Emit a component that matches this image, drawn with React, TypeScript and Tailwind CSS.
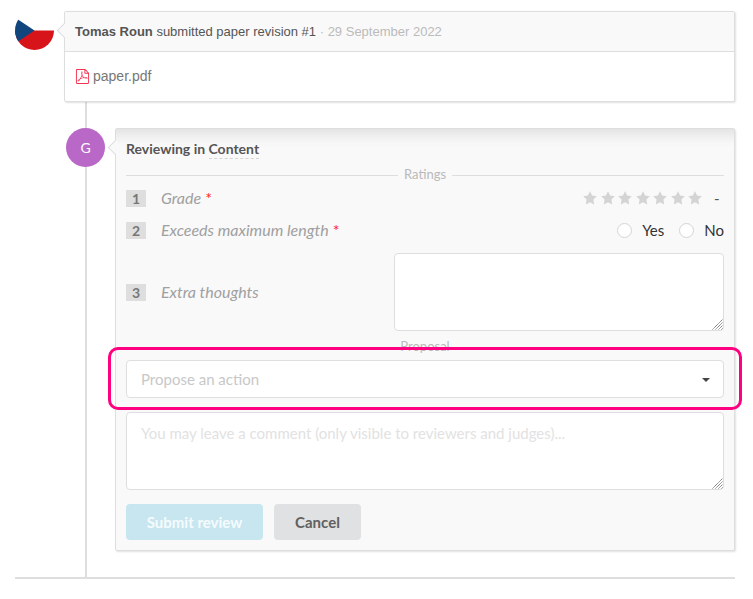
import type { ComponentProps } from "react";
import { ImFilePdf } from "react-icons/im";

const STARS = [1, 2, 3, 4, 5, 6, 7];

function Notch() {
  return (
    <span className="absolute top-[13px] -left-[6px] size-[11px] rotate-45 border-b border-l border-[#dededf] bg-[#f9f9f9]" />
  );
}

function SectionDivider({ label }: { label: string }) {
  return (
    <div className="flex h-[14px] items-center gap-[6px] text-[13px] leading-[14px] text-[#b9b9b9]">
      <span className="h-px flex-1 bg-[#dededf]" />
      <span className="pb-[3px]">{label}</span>
      <span className="h-px flex-1 bg-[#dededf]" />
    </div>
  );
}

function QuestionLabel({
  index,
  text,
  required,
  htmlFor,
}: {
  index: number;
  text: string;
  required?: boolean;
  htmlFor?: string;
}) {
  return (
    <div className="flex flex-1 items-center gap-[15px]">
      <span className="h-[17px] w-5 bg-[#dedede] text-center text-[14px] leading-[17px] font-bold text-[#777]">
        {index}
      </span>
      <label htmlFor={htmlFor} className="text-[16px] leading-5 text-[#a0a0a0] italic">
        {text}
        {required && <span className="text-[#f22] not-italic"> *</span>}
      </label>
    </div>
  );
}

function Star({ value }: { value: number }) {
  return (
    <button type="button" aria-label={`Rate ${value}`} className="block text-[#d4d4d5]">
      <svg viewBox="0 0 14 14" className="size-[14px]" fill="currentColor">
        <path d="M7 .2 9.1 4.6l4.7.6-3.4 3.3.8 4.9L7 11.2l-4.2 2.2.8-4.9L.2 5.2l4.7-.6Z" />
      </svg>
    </button>
  );
}

function Choice({ label }: { label: string }) {
  return (
    <label className="flex items-center gap-[10px] text-[#333]">
      <input
        type="radio"
        name="exceeds"
        className="size-[15px] appearance-none rounded-full border border-[#d4d4d5] bg-white"
      />
      {label}
    </label>
  );
}

function TextArea(props: ComponentProps<"textarea">) {
  return (
    <div className="relative">
      <textarea
        {...props}
        className="block h-[78px] w-full resize rounded-[4px] border border-[#dededf] bg-white px-[14px] py-[11px] leading-[18px] placeholder:text-[#e2e2e2] [&::-webkit-resizer]:hidden"
      />
      <svg
        viewBox="0 0 11 11"
        className="pointer-events-none absolute right-px bottom-px size-[11px]"
        stroke="#777"
        strokeWidth="1"
        strokeDasharray="1.4 .3"
      >
        <path d="M.5 10.5l10-10M3.5 10.5l7-7M6.5 10.5l4-4M9.5 10.5l1-1" />
      </svg>
    </div>
  );
}

export default function App() {
  return (
    <main className="bg-white pt-[11px] pr-[18px] pl-[15px] font-['Liberation_Sans',Arial,sans-serif]">
      <section className="flex items-start gap-[10px]">
        <svg viewBox="0 0 39 39" className="size-[39px] shrink-0" role="img" aria-label="Tomas Roun">
          <clipPath id="flag">
            <circle cx="19.5" cy="19.5" r="19.5" />
          </clipPath>
          <g clipPath="url(#flag)">
            <path fill="#fff" d="M0 0h39v39H0z" />
            <path fill="#d7141a" d="M0 19.5h39V39H0z" />
            <path fill="#11457e" d="M-9.7 0 19.5 19.5-9.7 39z" />
          </g>
        </svg>
        <article className="relative flex-1 rounded-[2px] border border-[#dededf] bg-white shadow-[1px_1px_2px_#0000001f]">
          <header className="border-b border-[#dededf] bg-[#f9f9f9] px-[10px] text-[13px] leading-[39px] text-[#555]">
            <Notch />
            <strong>Tomas Roun</strong> submitted paper revision #1{" "}
            <span className="text-[#bbb]">· 29 September 2022</span>
          </header>
          <div className="flex h-[49px] items-center px-[10px]">
            <a href="#paper" className="flex items-center gap-[3px] text-[14px] text-[#777]">
              <ImFilePdf className="size-[15px] text-[#f23350]" />
              paper.pdf
            </a>
          </div>
        </article>
      </section>

      <section className="ml-[70px] border-l-2 border-[#dededf] py-[26px] font-[Lato,'Open_Sans',sans-serif] text-[15px]">
        <div className="-ml-[21px] flex items-start gap-[10px]">
          <span className="flex size-[39px] shrink-0 items-center justify-center rounded-full bg-[#ba68c8] text-[14px] text-white">
            G
          </span>
          <form className="relative flex-1 rounded-[2px] border border-[#dededf] bg-[#f9f9f9] p-[10px] shadow-[1px_1px_2px_#0000001f,inset_0_22px_16px_-18px_#0000001f]">
            <Notch />
            <h2 className="mb-[9px] h-5 text-[14px] leading-5 font-bold text-[#555]">
              Reviewing in{" "}
              <span className="inline-block h-5 border-b border-dashed border-[#d4d4d5]">Content</span>
            </h2>

            <SectionDivider label="Ratings" />
            <div className="flex h-8 items-center">
              <QuestionLabel index={1} text="Grade" required />
              <div className="flex w-[119px] justify-between">
                {STARS.map((n) => (
                  <Star key={n} value={n} />
                ))}
              </div>
              <span className="w-[22px] pl-3 text-[#555]">-</span>
            </div>
            <div className="flex h-8 items-center">
              <QuestionLabel index={2} text="Exceeds maximum length" required />
              <div className="flex gap-[15px]">
                <Choice label="Yes" />
                <Choice label="No" />
              </div>
            </div>
            <div className="flex items-center py-[7px]">
              <QuestionLabel index={3} text="Extra thoughts" htmlFor="thoughts" />
              <div className="w-[330px]">
                <TextArea id="thoughts" />
              </div>
            </div>

            <div className="pt-[2px] pb-[6px]">
              <SectionDivider label="Proposal" />
            </div>
            <div className="relative">
              <select
                aria-label="Propose an action"
                className="block h-[38px] w-full appearance-none rounded-[4px] border border-[#dededf] bg-white px-[14px] text-[#c8c8c8]"
              >
                <option>Propose an action</option>
              </select>
              <svg
                viewBox="0 0 8 4"
                className="pointer-events-none absolute top-[18px] right-[14px] h-1 w-2"
                fill="#444"
              >
                <path d="M0 0h8L4 4z" />
              </svg>
              <span className="pointer-events-none absolute -inset-x-[18px] -top-[13px] -bottom-[12px] rounded-[10px] border-3 border-[#ff0080]" />
            </div>
            <div className="py-[14px]">
              <TextArea
                aria-label="Comment"
                placeholder="You may leave a comment (only visible to reviewers and judges)..."
              />
            </div>
            <div className="flex gap-[11px] font-bold">
              <button type="button" disabled className="h-9 w-[137px] rounded-[4px] bg-[#c8e6f0] text-[#f5fbfd]">
                Submit review
              </button>
              <button type="button" className="h-9 w-[87px] rounded-[4px] bg-[#e0e1e2] text-[#606060]">
                Cancel
              </button>
            </div>
          </form>
        </div>
      </section>
      <hr className="border-t-2 border-[#dededf]" />
    </main>
  );
}
